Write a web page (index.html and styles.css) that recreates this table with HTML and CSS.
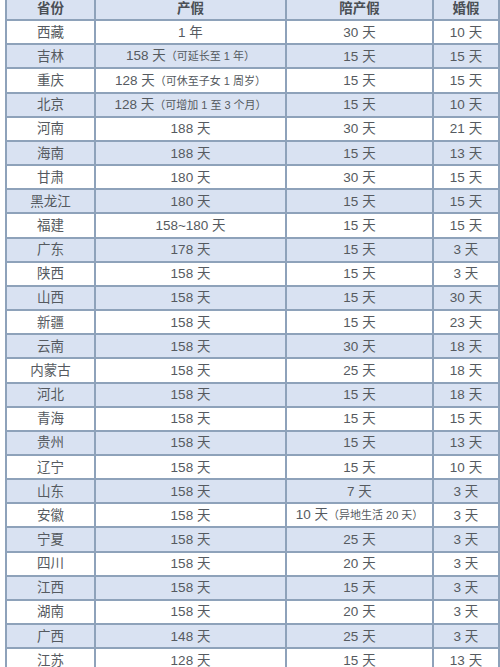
FILE: index.html
```html
<!DOCTYPE html>
<html lang="zh">
<head>
<meta charset="utf-8">
<link rel="stylesheet" href="styles.css">
</head>
<body>
<table class="leave">
<colgroup><col class="c1"><col class="c2"><col class="c3"><col class="c4"></colgroup>
<thead>
<tr><th>省份</th><th>产假</th><th>陪产假</th><th>婚假</th></tr>
</thead>
<tbody>
<tr><td>西藏</td><td>1 年</td><td>30 天</td><td>10 天</td></tr>
<tr><td>吉林</td><td>158 天<span class="note">（可延长至 1 年）</span></td><td>15 天</td><td>15 天</td></tr>
<tr><td>重庆</td><td>128 天<span class="note">（可休至子女 1 周岁）</span></td><td>15 天</td><td>15 天</td></tr>
<tr><td>北京</td><td>128 天<span class="note">（可增加 1 至 3 个月）</span></td><td>15 天</td><td>10 天</td></tr>
<tr><td>河南</td><td>188 天</td><td>30 天</td><td>21 天</td></tr>
<tr><td>海南</td><td>188 天</td><td>15 天</td><td>13 天</td></tr>
<tr><td>甘肃</td><td>180 天</td><td>30 天</td><td>15 天</td></tr>
<tr><td>黑龙江</td><td>180 天</td><td>15 天</td><td>15 天</td></tr>
<tr><td>福建</td><td>158~180 天</td><td>15 天</td><td>15 天</td></tr>
<tr><td>广东</td><td>178 天</td><td>15 天</td><td>3 天</td></tr>
<tr><td>陕西</td><td>158 天</td><td>15 天</td><td>3 天</td></tr>
<tr><td>山西</td><td>158 天</td><td>15 天</td><td>30 天</td></tr>
<tr><td>新疆</td><td>158 天</td><td>15 天</td><td>23 天</td></tr>
<tr><td>云南</td><td>158 天</td><td>30 天</td><td>18 天</td></tr>
<tr><td>内蒙古</td><td>158 天</td><td>25 天</td><td>18 天</td></tr>
<tr><td>河北</td><td>158 天</td><td>15 天</td><td>18 天</td></tr>
<tr><td>青海</td><td>158 天</td><td>15 天</td><td>15 天</td></tr>
<tr><td>贵州</td><td>158 天</td><td>15 天</td><td>13 天</td></tr>
<tr><td>辽宁</td><td>158 天</td><td>15 天</td><td>10 天</td></tr>
<tr><td>山东</td><td>158 天</td><td>7 天</td><td>3 天</td></tr>
<tr><td>安徽</td><td>158 天</td><td>10 天<span class="note">（异地生活 20 天）</span></td><td>3 天</td></tr>
<tr><td>宁夏</td><td>158 天</td><td>25 天</td><td>3 天</td></tr>
<tr><td>四川</td><td>158 天</td><td>20 天</td><td>3 天</td></tr>
<tr><td>江西</td><td>158 天</td><td>15 天</td><td>3 天</td></tr>
<tr><td>湖南</td><td>158 天</td><td>20 天</td><td>3 天</td></tr>
<tr><td>广西</td><td>148 天</td><td>25 天</td><td>3 天</td></tr>
<tr><td>江苏</td><td>128 天</td><td>15 天</td><td>13 天</td></tr>
</tbody>
</table>
</body>
</html>
```

FILE: styles.css
```css
html, body {
  margin: 0;
  padding: 0;
  background: #ffffff;
  overflow: hidden;
}

.leave {
  margin: -5px 0 0 5px;
  width: 493px;
  border-collapse: collapse;
  table-layout: fixed;
  font-family: "Liberation Sans", "Noto Sans CJK SC", sans-serif;
  font-size: 13.5px;
  color: #555a60;
}

.c1 { width: 89px; }
.c2 { width: 191px; }
.c3 { width: 147px; }
.c4 { width: 66px; }

.leave th,
.leave td {
  border: 2px solid #8ea2ba;
  height: 22.17px;
  padding: 0;
  text-align: center;
  vertical-align: middle;
  line-height: 15px;
  white-space: nowrap;
  overflow: hidden;
}

.leave th {
  font-weight: 700;
  color: #4a4f55;
  font-size: 13.5px;
  background: #d9e2f2;
}

.leave tbody tr:nth-child(even) td {
  background: #d9e2f2;
}

.leave tbody tr:nth-child(odd) td {
  background: #ffffff;
}

.note {
  font-size: 11px;
}
```
